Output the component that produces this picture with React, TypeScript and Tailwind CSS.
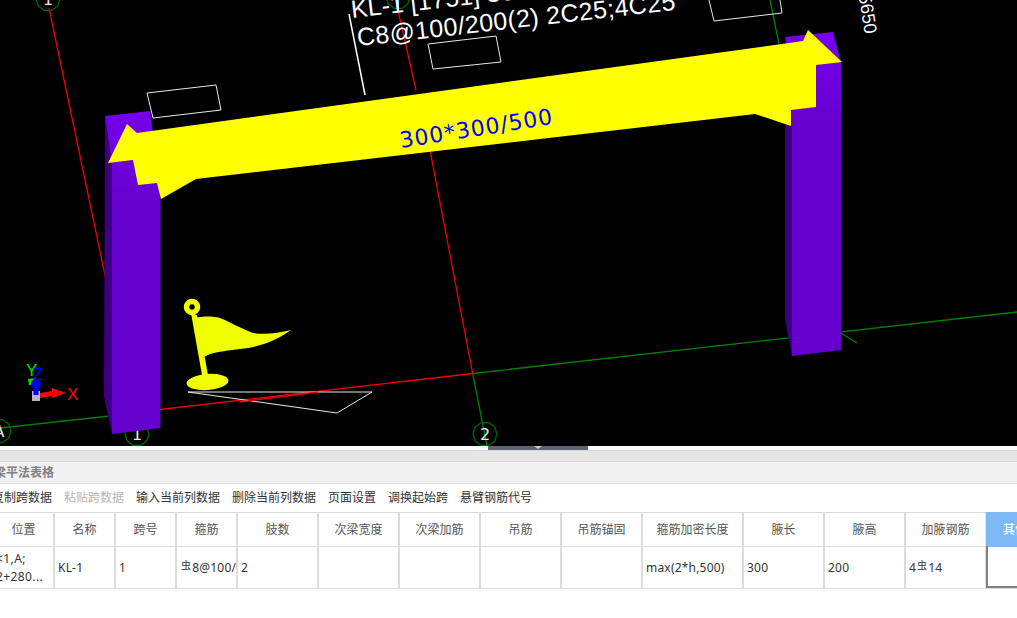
const toolbar = [
  { label: "复制跨数据" },
  { label: "粘贴跨数据", disabled: true },
  { label: "输入当前列数据" },
  { label: "删除当前列数据" },
  { label: "页面设置" },
  { label: "调换起始跨" },
  { label: "悬臂钢筋代号" },
];

// first column runs off the left edge, last one off the right edge
const columns = [
  { head: "位置", width: 61 },
  { head: "名称", width: 61 },
  { head: "跨号", width: 61 },
  { head: "箍筋", width: 61 },
  { head: "肢数", width: 81 },
  { head: "次梁宽度", width: 81 },
  { head: "次梁加筋", width: 81 },
  { head: "吊筋", width: 81 },
  { head: "吊筋锚固", width: 81 },
  { head: "箍筋加密长度", width: 101 },
  { head: "腋长", width: 81 },
  { head: "腋高", width: 81 },
  { head: "加腋钢筋", width: 81 },
];

function Rebar() {
  return <span className="relative -top-[3px] mx-[1px] text-[10px] leading-none">虫</span>;
}

function GridCircle({ x, y, label }: { x: number; y: number; label: string }) {
  const pts = Array.from({ length: 10 }, (_, i) => {
    const a = (i / 10) * Math.PI * 2;
    return `${x + 12 * Math.cos(a)},${y + 12 * Math.sin(a)}`;
  }).join(" ");
  return (
    <g>
      <polygon points={pts} fill="none" stroke="#006600" strokeWidth="1.3" />
      <text x={x} y={y + 6} textAnchor="middle" fontSize="16" fill="#e8e8e8" fontFamily="'DejaVu Sans', sans-serif">
        {label}
      </text>
    </g>
  );
}

function Scene() {
  return (
    <svg width="1017" height="446" viewBox="0 0 1017 446" className="block">
      <defs>
        <linearGradient id="columnFace" x1="0" y1="0" x2="0" y2="1">
          <stop offset="0" stopColor="#7600ee" />
          <stop offset="0.3" stopColor="#6600cc" />
          <stop offset="1" stopColor="#6600cc" />
        </linearGradient>
      </defs>
      <rect width="1017" height="446" fill="#000" />

      {/* axis lines */}
      <line x1="0" y1="428" x2="110" y2="416" stroke="#008000" strokeWidth="1.3" />
      <line x1="160" y1="409.500" x2="472.700" y2="373.500" stroke="#f00000" strokeWidth="1.3" />
      <line x1="472.700" y1="373.500" x2="1017" y2="312" stroke="#008000" strokeWidth="1.3" />
      <line x1="49" y1="8" x2="106" y2="280" stroke="#f00000" strokeWidth="1.3" />
      <line x1="397" y1="6" x2="416" y2="90" stroke="#f00000" strokeWidth="1.3" />
      <line x1="430" y1="150" x2="472.700" y2="373.500" stroke="#f00000" strokeWidth="1.3" />
      <line x1="472.700" y1="373.500" x2="487" y2="446" stroke="#008000" strokeWidth="1.3" />
      <line x1="770" y1="0" x2="779" y2="44" stroke="#008000" strokeWidth="1.3" />
      <line x1="841" y1="333" x2="857" y2="343" stroke="#008000" strokeWidth="1.3" />

      <GridCircle x={48} y={-1} label="1" />
      <GridCircle x={137} y={434} label="1" />
      <GridCircle x={485} y={434} label="2" />
      <GridCircle x={-1} y={431} label="A" />
      <GridCircle x={398} y={-3} label="" />
      <line x1="398" y1="0" x2="398" y2="10" stroke="#33ddee" strokeWidth="2" />

      {/* white outlines */}
      <polyline points="349,14 365,95" stroke="#fff" strokeWidth="1.500" fill="none" />
      <polygon points="147,93 216,85 221,110 153,118" fill="none" stroke="#e8e8e8" />
      <polygon points="428,44 496,36 501,62 433,69" fill="none" stroke="#e8e8e8" />
      <polyline points="709,0 714,21 782,13 780,0" fill="none" stroke="#e8e8e8" />
      <polygon points="188,392 372,392 337,413" fill="none" stroke="#e8e8e8" />
      <line x1="240" y1="402" x2="318" y2="392" stroke="#f00000" strokeWidth="1.3" />

      {/* left column */}
      <polygon points="105,116 112,165 112,434 104,397" fill="#3c0080" />
      <polygon points="105,116 150,111 160.500,190 160.500,428 112,434 112,165" fill="url(#columnFace)" />

      {/* right column */}
      <polygon points="785,37 792,70 792,356 785,319" fill="#3c0080" />
      <polygon points="785,37 833,32 841,62 841,350 792,356 792,70" fill="url(#columnFace)" />

      {/* span arrow */}
      <polygon
        points="108,163 127,124 137,133 803,41 808,30 842,62 816,65 816,107 791,110 791,126 755,114 196,179 161,199 157,183 138,185 133,160"
        fill="#ffff00"
      />
      <text
        x="401"
        y="148"
        transform="rotate(-9 401 148)"
        fontSize="22"
        fill="#0000ff"
        textLength="154"
        fontFamily="'DejaVu Sans', sans-serif"
      >
        300*300/500
      </text>

      {/* beam label */}
      <g fill="#fff" fontFamily="'Liberation Sans', sans-serif" fontSize="25">
        <text x="352" y="18" transform="rotate(-6.500 352 18)">KL-1 [1751] 300*500</text>
        <text x="358" y="46" transform="rotate(-6.500 358 46)" textLength="320">C8@100/200(2) 2C25;4C25</text>
        <text x="857" y="-15" transform="rotate(81 857 -15)" fontSize="18">25650</text>
      </g>

      {/* flag */}
      <g fill="#f0ff00">
        <path d="M191 313 L197 315 L208 375 L202 375 Z" />
        <path d="M195 318 C203 316 213 316 220 318 C228 321 238 327 253 333 C265 335 278 333 291 330 C282 336 275 340 267 343 C258 346 250 348 240 349 C230 350 217 352 210 354 L204 357 Z" />
        <ellipse cx="207.500" cy="382" rx="21" ry="8" transform="rotate(-4 207.500 382)" />
        <circle cx="192" cy="307" r="5.500" fill="none" stroke="#f0ff00" strokeWidth="5.500" />
      </g>

      {/* axis gizmo */}
      <rect x="32" y="391" width="8" height="10" fill="#b8b8b8" />
      <polygon points="40,393 52,391 52,388 66,393 52,398 52,396 40,398" fill="#ff0000" />
      <path d="M28 379 L36 378 L33 385 L29 385 Z" fill="#00e000" />
      <rect x="33.500" y="384" width="5" height="11" fill="#0000ff" />
      <circle cx="36" cy="384" r="5" fill="#0000e0" />
      <g fontFamily="'Liberation Sans', sans-serif" fontSize="17">
        <text x="26" y="376" fill="#00e000">Y</text>
        <text x="33" y="380" fill="#0000ff">Z</text>
        <text x="67" y="400" fill="#ff0000">X</text>
      </g>
    </svg>
  );
}

function Cell({ width, className = "", children }: { width: number; className?: string; children?: React.ReactNode }) {
  return (
    <div
      className={`flex shrink-0 items-center border-r-2 border-[#dcdcdc] pl-[3px] text-[12px] tracking-[0.2px] ${className}`}
      style={{ width }}
    >
      {children}
    </div>
  );
}

export default function App() {
  return (
    <div
      className="h-[618px] w-[1017px] overflow-hidden bg-white text-[12px] text-[#333]"
      style={{ fontFamily: "'Noto Sans', 'Noto Sans CJK SC', sans-serif" }}
    >
      <Scene />

      {/* splitter handle */}
      <div className="h-[4px] bg-white pl-[488px]">
        <div className="flex h-[4px] w-[100px] justify-center bg-[#5c6570]">
          <div className="h-0 w-0 border-x-[4px] border-t-[3px] border-x-transparent border-t-[#c8ccd0]" />
        </div>
      </div>

      <div className="h-[12px] border-y border-[#d9d9d9] bg-[#e6e6e6]" />
      <div className="flex h-[22px] items-center border-b border-[#d9d9d9] bg-[#f0f0f0]">
        <span className="-ml-[6px] font-bold leading-none text-[#808080]">梁平法表格</span>
      </div>

      <div className="flex h-[28px] items-center gap-3 whitespace-nowrap">
        {toolbar.map((item, i) => (
          <span key={item.label} className={`${i === 0 ? "-ml-[8px]" : ""} ${item.disabled ? "text-[#b5b5b5]" : "text-[#333]"}`}>
            {item.label}
          </span>
        ))}
      </div>

      {/* table */}
      <div className="-ml-[6px] flex h-[35px] w-[1100px] border-y border-[#dcdcdc]">
        {columns.map((col) => (
          <div
            key={col.head}
            className="flex shrink-0 items-center justify-center border-r-2 border-[#dcdcdc] text-[#555]"
            style={{ width: col.width }}
          >
            {col.head}
          </div>
        ))}
        <div className="-ml-[1px] -mt-[1px] flex h-[35px] w-[58px] shrink-0 items-center justify-center bg-[#7db9f7] font-medium text-white">
          其他
        </div>
      </div>
      <div className="-ml-[6px] flex h-[42px] w-[1100px] border-b border-[#dcdcdc]">
        <Cell width={61} className="overflow-hidden">
          <div className="-ml-[1px] whitespace-nowrap text-[12px] leading-[18px] tracking-[0.4px]">
            &lt;1,A;
            <br />
            2+280...
          </div>
        </Cell>
        <Cell width={61}>KL-1</Cell>
        <Cell width={61}>1</Cell>
        <Cell width={61} className="overflow-hidden whitespace-nowrap">
          <Rebar />8@100/
        </Cell>
        <Cell width={81}>2</Cell>
        <Cell width={81} />
        <Cell width={81} />
        <Cell width={81} />
        <Cell width={81} />
        <Cell width={101}>max(2*h,500)</Cell>
        <Cell width={81}>300</Cell>
        <Cell width={81}>200</Cell>
        <Cell width={81}>
          4<Rebar />14
        </Cell>
        <div className="-ml-[1px] -mt-[1px] h-[42px] w-[61px] shrink-0 border-b-2 border-l-2 border-[#808080]" />
      </div>
    </div>
  );
}
